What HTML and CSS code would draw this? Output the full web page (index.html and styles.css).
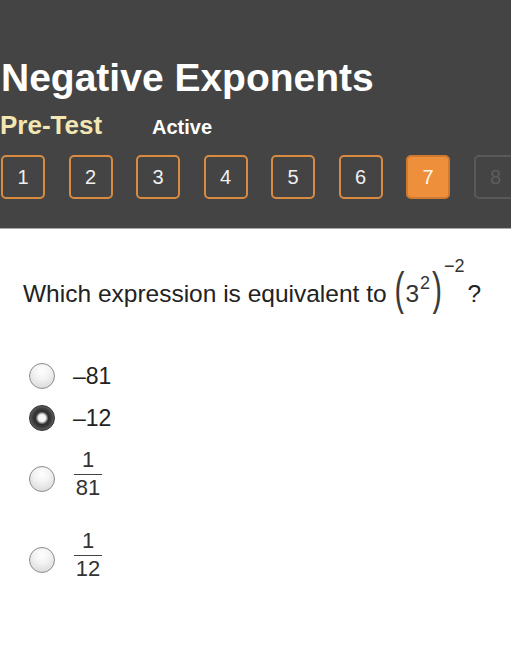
FILE: index.html
```html
<!DOCTYPE html>
<html>
<head>
<meta charset="utf-8">
<link rel="stylesheet" href="styles.css">
</head>
<body>
<header class="header">
  <h1 class="title">Negative Exponents</h1>
  <div class="sub">
    <span class="kind">Pre-Test</span>
    <span class="status">Active</span>
  </div>
  <nav class="steps">
    <span class="step">1</span>
    <span class="step">2</span>
    <span class="step">3</span>
    <span class="step">4</span>
    <span class="step">5</span>
    <span class="step">6</span>
    <span class="step current">7</span>
    <span class="step locked">8</span>
  </nav>
</header>
<main class="content">
  <p class="question">Which expression is equivalent to <span class="paren">(</span><span class="base">3<sup class="inner">2</sup></span><span class="paren">)</span><sup class="outer">−2</sup><span class="qmark">?</span></p>
  <div class="options">
    <label class="opt"><span class="radio"></span><span class="val">–81</span></label>
    <label class="opt o2"><span class="radio checked"></span><span class="val">–12</span></label>
    <label class="opt frac-row o3"><span class="radio"></span><span class="frac"><span class="num">1</span><span class="bar"></span><span class="den">81</span></span></label>
    <label class="opt frac-row o4"><span class="radio"></span><span class="frac"><span class="num">1</span><span class="bar"></span><span class="den">12</span></span></label>
  </div>
</main>
</body>
</html>
```

FILE: styles.css
```css
html, body {
  margin: 0;
  padding: 0;
  background: #ffffff;
  font-family: "Liberation Sans", Arial, sans-serif;
}

.header {
  background: #444444;
  height: 229px;
  box-sizing: border-box;
  padding-top: 58px;
  border-bottom: 1px solid #a8a8a8;
  overflow: hidden;
}

.title {
  margin: 0;
  padding-left: 1px;
  font-size: 39px;
  line-height: 39px;
  font-weight: bold;
  color: #ffffff;
}

.sub {
  display: flex;
  align-items: baseline;
  margin-top: 16px;
  height: 25px;
}

.kind {
  font-size: 26px;
  line-height: 25px;
  font-weight: bold;
  color: #f3e6b3;
  width: 152px;
}

.status {
  font-size: 20px;
  line-height: 25px;
  font-weight: bold;
  color: #ffffff;
}

.steps {
  display: flex;
  gap: 23.5px;
  margin-top: 17px;
  padding-left: 1px;
}

.step {
  flex: 0 0 44px;
  height: 44px;
  box-sizing: border-box;
  border: 2px solid #d98b42;
  border-radius: 5px;
  display: flex;
  align-items: center;
  justify-content: center;
  font-size: 20px;
  color: #f0f0f0;
}

.step.current {
  background: #ee8f3b;
  border-color: #cf7a30;
  color: #fff6ea;
}

.step.locked {
  border-color: #595959;
  color: #5d5d5d;
}

.content {
  padding-left: 23px;
}

.question {
  margin: 35px 0 0 0;
  font-size: 24.5px;
  line-height: 60px;
  color: #222222;
  white-space: nowrap;
}

.paren {
  display: inline-block;
  font-size: 30px;
  line-height: 30px;
  color: #3a3a3a;
  transform: scaleY(1.55);
  vertical-align: 3px;
  margin: 0 2px 0 2px;
}

.paren:first-of-type {
  margin-left: 1px;
  margin-right: 1px;
}

.base {
  color: #333333;
}

.inner {
  font-size: 18px;
  line-height: 0;
  vertical-align: 13px;
  margin-left: 1px;
}

.outer {
  font-size: 18px;
  line-height: 0;
  vertical-align: 30px;
  color: #333333;
}

.qmark {
  margin-left: 3px;
}

.options {
  margin-top: 37px;
  padding-left: 6px;
}

.opt {
  display: flex;
  align-items: center;
  gap: 18px;
  height: 30px;
}

.o2 {
  margin-top: 12px;
}

.frac-row {
  height: 50px;
  align-items: flex-start;
}

.o3 {
  margin-top: 15.5px;
}

.o4 {
  margin-top: 31px;
}

.frac-row .radio {
  margin-top: 17.5px;
}

.radio {
  flex: 0 0 26px;
  width: 26px;
  height: 26px;
  box-sizing: border-box;
  border-radius: 50%;
  border: 1px solid #8c8c8c;
  background: radial-gradient(circle at 50% 30%, #ffffff 0, #f2f2f2 40%, #d2d2d2 100%);
}

.radio.checked {
  border-color: #2e2e2e;
  background: radial-gradient(circle at 50% 50%, #f6f6f6 0, #f6f6f6 3.5px, #a0a0a0 4.8px, #2f2f2f 6.5px, #3a3a3a 9px, #6b6b6b 13px);
}

.val {
  font-size: 23px;
  line-height: 30px;
  color: #222222;
}

.frac {
  display: flex;
  flex-direction: column;
  align-items: center;
  width: 28px;
  margin-left: 1px;
  font-size: 22px;
  color: #333333;
}

.num, .den {
  line-height: 22px;
}

.bar {
  align-self: stretch;
  height: 1px;
  background: #444444;
  margin: 3px 0 2px 0;
}
```
